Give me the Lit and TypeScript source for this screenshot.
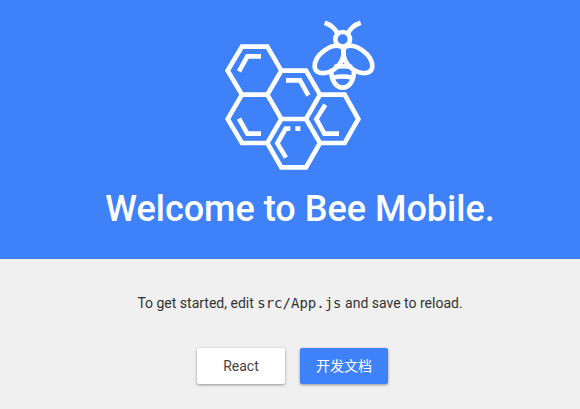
import { LitElement, html, css } from "lit";
import { customElement } from "lit/decorators.js";

@customElement("bee-logo")
class BeeLogo extends LitElement {
  static styles = css`
    :host {
      display: block;
      width: 150px;
      height: 150px;
    }
    .logo {
      display: block;
      width: 100%;
      height: 100%;
      fill: none;
      stroke: #fff;
      stroke-width: 14;
    }
  `;

  render() {
    return html`
      <svg class="logo" viewBox="15 30 450 450" role="img" aria-label="Bee Mobile">
        <path d="M66 110H142L184 182L142 254H66L23 182Z" />
        <path d="M184 182H258L300 254L258 327H184L142 254" />
        <path d="M66 254L23 327L66 399H142L184 327" />
        <path d="M300 254H374L415 327L374 399H300L258 327" />
        <path d="M142 399L184 472H258L300 399" />
        <path d="M57 184L82 139H123" />
        <path d="M198 211H240L265 256" />
        <path d="M57 326L82 371H123" />
        <path d="M316 284L289 327L313 371H357" />
        <path d="M198 443L172 400L197 356H211M226 356H241" />
        <circle cx="368" cy="88" r="22" />
        <path d="M314 38Q342 47 353 72" />
        <path d="M422 38Q394 47 383 72" />
        <path d="M370 140C372 126 370 114 364 110C334 98 284 134 284 169C284 191 310 193 330 185C350 177 366 158 370 138" />
        <path d="M371 140C369 126 371 114 377 110C407 98 457 134 457 169C457 191 431 193 411 185C391 177 375 158 371 138" />
        <path d="M334 182C334 212 348 233 368 233C388 233 402 212 402 182" />
        <path d="M343 171Q368 166 396 171" />
        <path d="M338 203Q368 196 398 203" />
      </svg>
    `;
  }
}

@customElement("app-root")
class AppRoot extends LitElement {
  static styles = css`
    :host {
      display: block;
      min-height: 100vh;
      background: #f0f0f0;
      color: #333;
      font: 14px/20px Roboto, "Noto Sans CJK SC", sans-serif;
      text-align: center;
    }
    .header {
      display: flex;
      flex-direction: column;
      align-items: center;
      gap: 19px;
      padding: 20px 0 30px 20px;
      background: #3e81f9;
      color: #fff;
    }
    .title {
      margin: 0;
      font-size: 36px;
      line-height: 40px;
      font-weight: 500;
    }
    .content {
      padding: 34px 0 24px 20px;
    }
    .intro {
      margin: 0 0 35px;
    }
    .code {
      font-family: "DejaVu Sans Mono", monospace;
      font-size: 14px;
      line-height: 16px;
    }
    .actions {
      display: flex;
      justify-content: center;
      gap: 15px;
      padding-right: 15px;
    }
    .button {
      min-width: 88px;
      height: 36px;
      padding: 0 16px;
      border: 0;
      border-radius: 2px;
      background: #fff;
      color: #444;
      font: inherit;
      box-shadow: 0 1px 3px rgba(0, 0, 0, 0.4);
      cursor: pointer;
    }
    .primary {
      background: #3e81f9;
      color: #fff;
    }
  `;

  render() {
    return html`
      <header class="header">
        <bee-logo></bee-logo>
        <h1 class="title">Welcome to Bee Mobile.</h1>
      </header>
      <main class="content">
        <p class="intro">
          To get started, edit <code class="code">src/App.js</code> and save to reload.
        </p>
        <div class="actions">
          <button class="button" type="button">React</button>
          <button class="button primary" type="button">开发文档</button>
        </div>
      </main>
    `;
  }
}
